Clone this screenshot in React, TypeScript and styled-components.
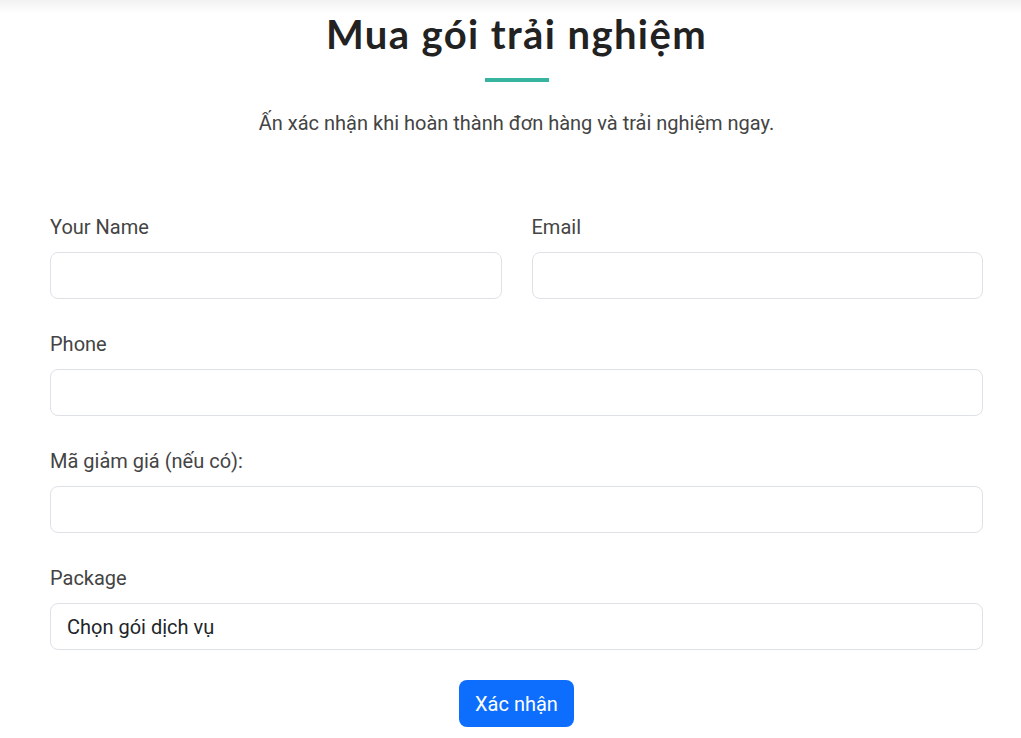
import styled, { createGlobalStyle } from 'styled-components';

const GlobalStyle = createGlobalStyle`
  body {
    margin: 0;
    background: #fff;
    font-family: Roboto, "Liberation Sans", sans-serif;
    color: #212529;
  }
  * { box-sizing: border-box; }
`;

const Page = styled.section`
  position: relative;
  padding: 10px 0 40px;
  &::before {
    content: '';
    position: absolute;
    top: 0;
    left: 0;
    right: 0;
    height: 14px;
    background: linear-gradient(to bottom, rgba(0, 0, 0, 0.05), rgba(0, 0, 0, 0));
  }
`;

const Container = styled.div`
  width: 933px;
  margin-left: 50px;
`;

const Heading = styled.header`
  display: flex;
  flex-direction: column;
  align-items: center;
  margin-bottom: 74px;
`;

const Title = styled.h2`
  margin: 0;
  font-family: Lato, "Noto Sans", sans-serif;
  font-weight: 700;
  font-size: 40px;
  line-height: 48px;
  letter-spacing: 1.4px;
  color: #222;
`;

const Divider = styled.span`
  display: block;
  width: 64px;
  height: 4px;
  margin-top: 20px;
  background: #37b49f;
`;

const Subtitle = styled.p`
  margin: 26px 0 0;
  font-size: 20px;
  line-height: 30px;
  color: #444;
`;

const Form = styled.form`
  display: grid;
  grid-template-columns: 1fr 1fr;
  column-gap: 30px;
  row-gap: 30px;
`;

const Field = styled.div<{ $wide?: boolean }>`
  display: flex;
  flex-direction: column;
  grid-column: ${(p) => (p.$wide ? '1 / -1' : 'auto')};
`;

const Label = styled.label`
  font-size: 20px;
  line-height: 30px;
  color: #444;
  margin-bottom: 10px;
`;

const Input = styled.input`
  height: 47px;
  padding: 0 16px;
  font: inherit;
  font-size: 20px;
  border: 1px solid #dee2e6;
  border-radius: 8px;
  background: #fff;
  outline: none;
`;

const Select = styled.select`
  height: 47px;
  padding: 0 16px;
  font-family: inherit;
  font-size: 20px;
  color: #212529;
  border: 1px solid #dee2e6;
  border-radius: 8px;
  background: #fff;
  appearance: none;
  outline: none;
`;

const Actions = styled.div`
  grid-column: 1 / -1;
  display: flex;
  justify-content: center;
`;

const Button = styled.button`
  height: 47px;
  padding: 0 16px;
  font-family: inherit;
  font-size: 20px;
  color: #fff;
  background: #0d6efd;
  border: none;
  border-radius: 8px;
  cursor: pointer;
`;

export default function App() {
  return (
    <>
      <GlobalStyle />
      <Page>
        <Container>
          <Heading>
            <Title>Mua gói trải nghiệm</Title>
            <Divider />
            <Subtitle>Ấn xác nhận khi hoàn thành đơn hàng và trải nghiệm ngay.</Subtitle>
          </Heading>
          <Form onSubmit={(e) => e.preventDefault()}>
            <Field>
              <Label htmlFor="name">Your Name</Label>
              <Input id="name" type="text" />
            </Field>
            <Field>
              <Label htmlFor="email">Email</Label>
              <Input id="email" type="email" />
            </Field>
            <Field $wide>
              <Label htmlFor="phone">Phone</Label>
              <Input id="phone" type="tel" />
            </Field>
            <Field $wide>
              <Label htmlFor="coupon">Mã giảm giá (nếu có):</Label>
              <Input id="coupon" type="text" />
            </Field>
            <Field $wide>
              <Label htmlFor="package">Package</Label>
              <Select id="package" defaultValue="">
                <option value="">Chọn gói dịch vụ</option>
              </Select>
            </Field>
            <Actions>
              <Button type="submit">Xác nhận</Button>
            </Actions>
          </Form>
        </Container>
      </Page>
    </>
  );
}
